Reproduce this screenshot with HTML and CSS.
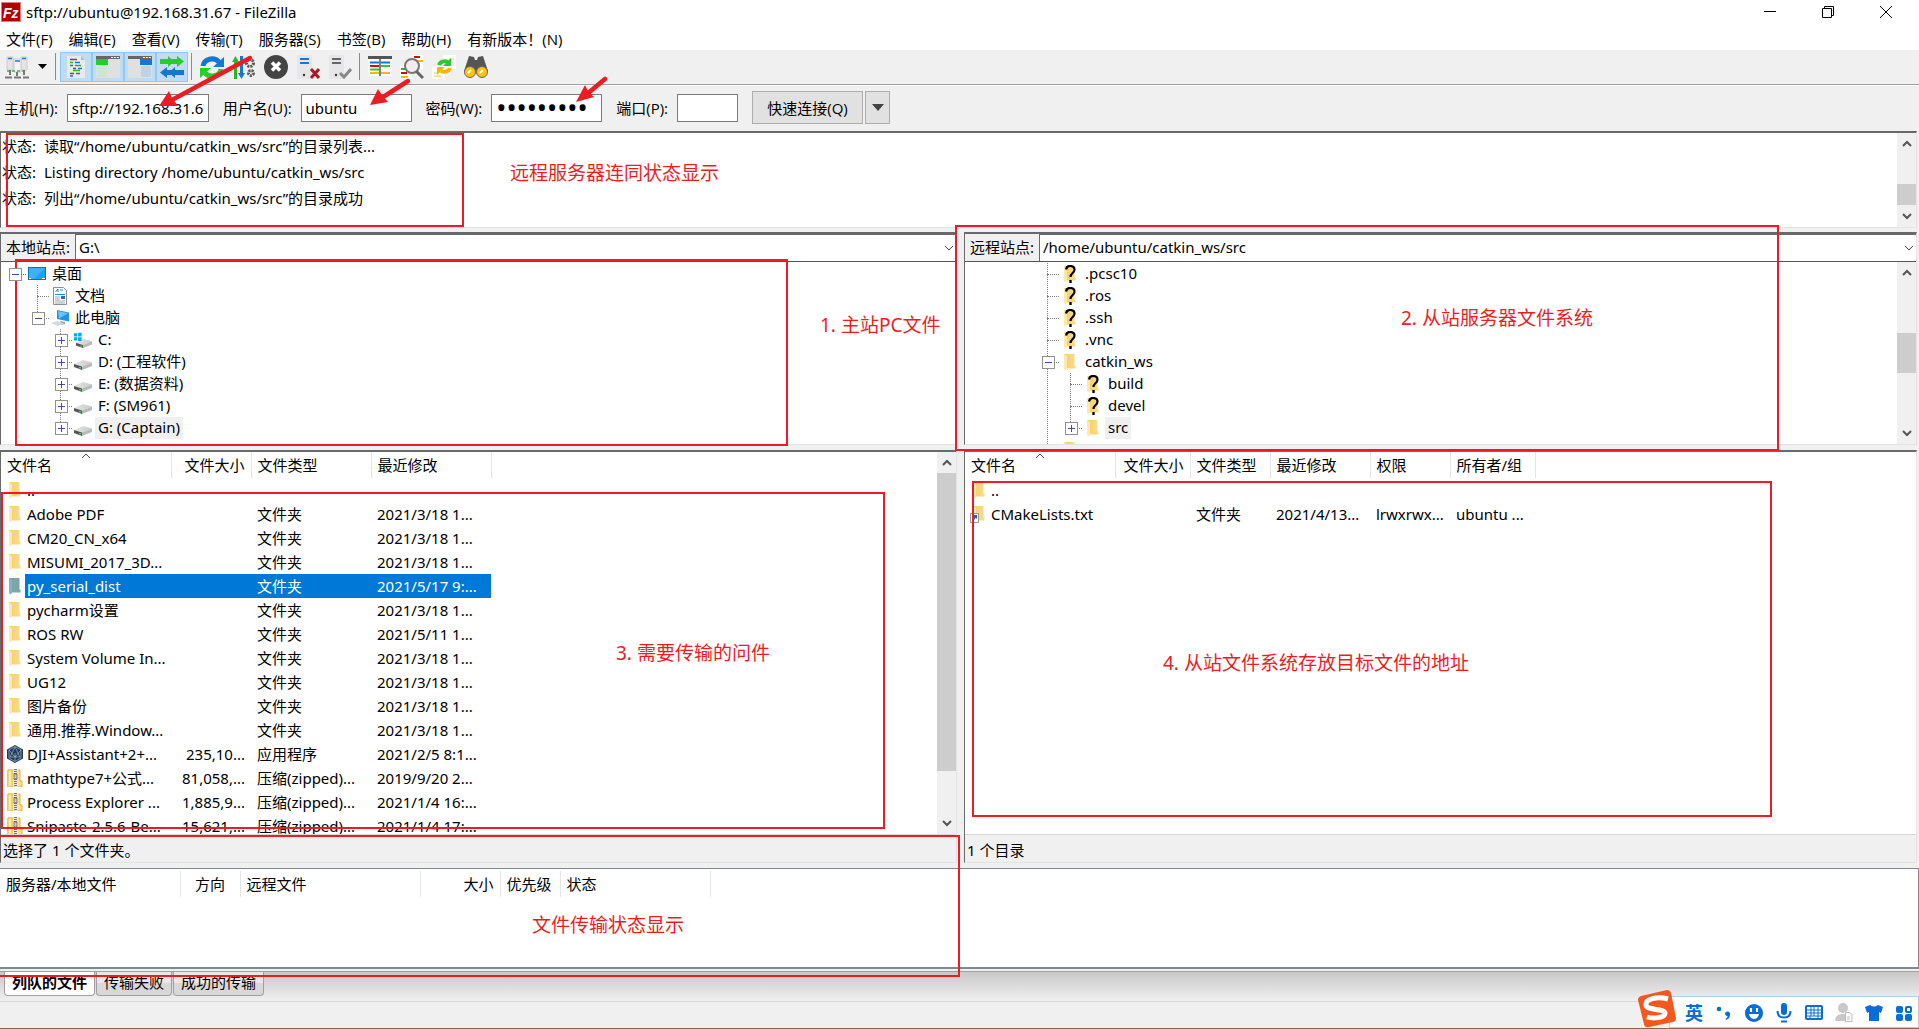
FILE: index.html
```html
<!DOCTYPE html>
<html lang="zh-CN">
<head>
<meta charset="utf-8">
<title>sftp://ubuntu@192.168.31.67 - FileZilla</title>
<link rel="stylesheet" href="styles.css">
</head>
<body>
<svg class="defs" aria-hidden="true">
  <defs>
    <linearGradient id="gold" x1="0" x2="1" y1="0" y2="0"><stop offset="0" stop-color="#f3ce6a"/><stop offset="1" stop-color="#f9dd8a"/></linearGradient>
    <linearGradient id="metal" x1="0" x2="1" y1="0" y2="0"><stop offset="0" stop-color="#e6e6e8"/><stop offset="1" stop-color="#c8c9cc"/></linearGradient>
    <symbol id="folder" viewBox="0 0 18 18"><path d="M3 1h10.500v11.500h1v3H3z" fill="url(#gold)"/><path d="M3 1l3 2v13l-1.500 1.500L3 16z" fill="#ffe9a6"/></symbol>
    <symbol id="folder-sel" viewBox="0 0 18 18"><path d="M3 1h10.500v11.500h1v3H3z" fill="#7ba6a6"/><path d="M3 1l3 2v13l-1.500 1.500L3 16z" fill="#7fb0cf"/></symbol>
    <symbol id="folder-q" viewBox="0 0 18 18"><use href="#folder"/><path d="M5 4.500C5.500 1.500 7 1 9 1c3 0 4.500 1.500 4.500 3.700C13.500 8 9.500 8 9.500 12" fill="none" stroke="#000" stroke-width="2.200"/><rect x="8.300" y="15" width="2.400" height="3"/></symbol>
    <symbol id="link" viewBox="0 0 18 18"><use href="#folder"/><rect x=".5" y="8.500" width="8" height="9" fill="#fff" stroke="#999"/><path d="M3 10h4v4L5.700 12.700 3.500 16 2 14.500l2.300-3z" fill="#2b5ba8"/></symbol>
    <symbol id="zip" viewBox="0 0 18 18"><path d="M2 1h12v11h2v6H2z" fill="#ffdf7f" stroke="#d9b23c"/><path d="M2 1h4v17H2z" fill="#ffeaa0" stroke="#e0bd50"/><path d="M9.500 0v18" stroke="#e8e8e8" stroke-width="5"/><path d="M9.500 0v18" stroke="#777" stroke-width="3" stroke-dasharray="1 1"/><rect x="8" y="5" width="3" height="5" fill="#ccc" stroke="#555" stroke-width=".7"/></symbol>
    <symbol id="dji" viewBox="0 0 18 18"><path d="M9 0l8 4.500v9L9 18l-8-4.500v-9z" fill="#203a55"/><path d="M9 1.500L3 5v8l6 3.500 6-3.500V5zM9 2l-5 10h10zM3 5l6 7 6-7M9 8v8" fill="none" stroke="#9dbad2" stroke-width=".7"/></symbol>
    <symbol id="desktop" viewBox="0 0 18 18"><rect x=".5" y="2.500" width="17" height="12" fill="#1ba1f5" stroke="#0873b8"/><path d="M17 3L6 14H1V3z" fill="#3cb0fa"/><path d="M1 13.500h2m11 0h3" stroke="#fff"/></symbol>
    <symbol id="doc" viewBox="0 0 18 18"><path d="M2.500.5h10l3 3v14h-13z" fill="#fff" stroke="#8a8f94"/><path d="M4.500 5L7 2v3M9 3h3M4 7.500h10" stroke="#2a84c8" fill="none"/><path d="M4 10h5m-5 2h5m-5 2h10M4 16h10" stroke="#9aa"/><rect x="10" y="9" width="4" height="3" fill="#2a6f9e"/></symbol>
    <symbol id="pc" viewBox="0 0 18 18"><path d="M6 1l12 2.500v9L6 10z" fill="#2196e0"/><path d="M7 2l10 2.200L8 9.500z" fill="#6cc3f5"/><path d="M9 12l5 1v2l-4 1z" fill="#98a5b0"/><path d="M0 14l6-2 7 2.500-6 2.500z" fill="#d5dade"/></symbol>
    <symbol id="drive" viewBox="0 0 18 18"><path d="M0 11l9-4 9 2.500L8 13.500z" fill="url(#metal)"/><path d="M0 11l8 2.500V17l-8-3z" fill="#555"/><path d="M8 13.500l10-4v3.500L8 17z" fill="#b8b9bb"/><rect x="5" y="14" width="2" height="1.500" fill="#39d353"/></symbol>
    <symbol id="drive-c" viewBox="-2 0 20 18"><use href="#drive" y="1" width="18" height="18"/><path d="M-2 1.500h3.500V5H-2zM2.500 1h4v4h-4zM-2 6h3.500v3.500H-2zM2.500 6h4v4h-4z" fill="#00adef"/></symbol>
    <symbol id="up" viewBox="0 0 10 8"><path d="M1 6l4-4 4 4" fill="none" stroke="#555" stroke-width="2"/></symbol>
    <symbol id="down" viewBox="0 0 10 8"><path d="M1 2l4 4 4-4" fill="none" stroke="#555" stroke-width="2"/></symbol>
    <symbol id="thin" viewBox="0 0 10 8"><path d="M1 2l4 4 4-4" fill="none" stroke="#444"/></symbol>
  </defs>
</svg>

<header class="titlebar">
  <svg class="app-icon" viewBox="0 0 20 20"><rect width="20" height="20" fill="#b30000"/><rect x=".5" y=".5" width="19" height="19" fill="none" stroke="#fff" stroke-dasharray="1 1"/><text x="2" y="16" class="logo-text">Fz</text></svg>
  <h1>sftp://ubuntu@192.168.31.67 - FileZilla</h1>
  <div class="win-buttons">
    <button aria-label="最小化"><svg viewBox="0 0 12 12"><path d="M0 5.500h12" stroke="#000"/></svg></button>
    <button aria-label="还原"><svg viewBox="0 0 12 12"><path d="M.5 2.500h9v9h-9zM2.500 2.500v-2h9v9h-2" fill="none" stroke="#000"/></svg></button>
    <button aria-label="关闭"><svg viewBox="0 0 12 12"><path d="M0 0l12 12M12 0L0 12" stroke="#000"/></svg></button>
  </div>
</header>
<nav class="menubar">
  <a href="#">文件(F)</a><a href="#">编辑(E)</a><a href="#">查看(V)</a><a href="#">传输(T)</a><a href="#">服务器(S)</a><a href="#">书签(B)</a><a href="#">帮助(H)</a><a href="#">有新版本！(N)</a>
</nav>

<div class="toolbar">
  <button class="tool" aria-label="站点管理器"><svg viewBox="0 0 24 24"><path d="M2 2h6v13H2zM16 2h6v13h-6z" fill="#e4e4e4" stroke="#ccc"/><path d="M9 4h7v13H9z" fill="#f4f4f4" stroke="#ccc"/><path d="M3 3.500h4m10 0h4M10 6h5" stroke="#1c7bd8" stroke-width="1.500"/><path d="M2 16h20" stroke="#39b54a" stroke-width="1.500" stroke-dasharray="3 2"/><path d="M5 15v5m7-3v4m7-6v5M0 22.500h7m2 0h7m2 0h6" stroke="#777" stroke-width="2"/></svg></button>
  <button class="tool-drop" aria-label="站点列表"><svg viewBox="0 0 10 6"><path d="M0 0h9L4.500 5z"/></svg></button>
  <span class="sep"></span>
  <button class="tool on" aria-label="消息日志"><svg viewBox="0 0 24 24"><path d="M3 1h14l4 4v18H3z" fill="#e9eaec"/><path d="M17 1v4h4z" fill="#bbb"/><path d="M6 4.500h7M9 13.500h3M6 18.500h4" stroke="#555" stroke-width="1.500"/><path d="M6 7.500h3m2 3h6m-8 5h7" stroke="#29b52d" stroke-width="1.500"/><path d="M11 7.500h5M6 10.500h3m5 3h4m-6 5h4M6 21h3" stroke="#1677d2" stroke-width="1.500"/></svg></button>
  <button class="tool on" aria-label="本地目录树"><svg viewBox="0 0 24 24"><rect y="1" width="24" height="22" rx="1" fill="#dfe0e2"/><path d="M0 1h24v3H0z" fill="#666"/><path d="M15 2.500h8" stroke="#fff" stroke-dasharray="2 1"/><path d="M0 4h12v6H0z" fill="#29cc2d"/><path d="M1 11h10v11H1z" fill="#cfe5cf"/></svg></button>
  <button class="tool on" aria-label="远程目录树"><svg viewBox="0 0 24 24"><rect y="1" width="24" height="22" rx="1" fill="#dfe0e2"/><path d="M0 1h24v3H0z" fill="#666"/><path d="M15 2.500h8" stroke="#fff" stroke-dasharray="2 1"/><path d="M12 4h12v6H12z" fill="#1677d2"/><path d="M13 11h10v11H13z" fill="#bdd3e6"/></svg></button>
  <button class="tool on" aria-label="传输队列"><svg viewBox="0 0 24 24"><path d="M0 4h8V1l6 5.500L8 12V9H0z" fill="#29cc2d"/><path d="M8 4h9V1l7 5.500L17 12V9H8z" fill="#29cc2d"/><path d="M24 15h-9v-3l-6 5.500 6 5.500v-3h9z" fill="#1677d2"/><path d="M15 15H7v-3l-7 5.500L7 23v-3h8z" fill="#1677d2"/></svg></button>
  <span class="sep"></span>
  <button class="tool" aria-label="刷新"><svg viewBox="0 0 24 24"><path d="M3 11a9 8 0 0 1 16-4" fill="none" stroke="#1677d2" stroke-width="5"/><path d="M24 2v10H13z" fill="#1677d2"/><path d="M21 14a9 8 0 0 1-16 4" fill="none" stroke="#29cc2d" stroke-width="5"/><path d="M0 23V13h11z" fill="#29cc2d"/></svg></button>
  <button class="tool" aria-label="处理队列"><svg viewBox="0 0 24 24"><path d="M3.500 24V5" stroke="#29b52d" stroke-width="3"/><path d="M0 7l3.500-6L7 7z" fill="#29b52d"/><path d="M9.500 1v18" stroke="#1677d2" stroke-width="3"/><path d="M6 18l3.500 6 3.500-6z" fill="#1677d2"/><circle cx="18" cy="8" r="3.500" fill="none" stroke="#555" stroke-width="3" stroke-dasharray="2 1"/><circle cx="19" cy="18" r="2.500" fill="none" stroke="#555" stroke-width="3" stroke-dasharray="2 1"/></svg></button>
  <button class="tool" aria-label="取消"><svg viewBox="0 0 24 24"><circle cx="12" cy="12" r="12" fill="#444"/><path d="M8 7.500l8 8m0-8l-8 8" stroke="#fff" stroke-width="3.500"/></svg></button>
  <button class="tool" aria-label="断开连接"><svg viewBox="0 0 24 24"><path d="M1 0h15v24H1z" fill="#e6e6e8"/><path d="M4 4h9M4 8h9" stroke="#1677d2" stroke-width="2"/><circle cx="8" cy="20" r="1.200" fill="#333"/><path d="M15 14l8 9m0-9l-8 9" stroke="#b01722" stroke-width="3"/></svg></button>
  <button class="tool" aria-label="重新连接"><svg viewBox="0 0 24 24"><path d="M1 0h15v24H1z" fill="#e6e6e8"/><path d="M4 4h9M4 8h9" stroke="#666" stroke-width="2"/><circle cx="8" cy="20" r="1.200" fill="#333"/><path d="M12 18l4 4 7-8" fill="none" stroke="#888" stroke-width="3"/></svg></button>
  <span class="sep"></span>
  <button class="tool" aria-label="目录列表过滤器"><svg viewBox="0 0 24 24"><path d="M0 2h24v19H0z" fill="#fafafa"/><path d="M0 1h24v3H0z" fill="#555"/><path d="M2 7.500h9m2 0h9" stroke="#1677d2" stroke-width="2"/><path d="M2 11h9" stroke="#c4121a" stroke-width="2"/><path d="M13 11h9M2 14.500h9" stroke="#29cc2d" stroke-width="2"/><path d="M2 18h9m2 0h9" stroke="#f0bd00" stroke-width="2"/><path d="M12 4v17" stroke="#555" stroke-width="1.500"/></svg></button>
  <button class="tool" aria-label="目录比较"><svg viewBox="0 0 24 24"><path d="M12 0h11v14H12zM0 10h12v14H0z" fill="#fff"/><path d="M14 2h6M1 18h6" stroke="#c4121a" stroke-width="2"/><path d="M17 6h6" stroke="#f0bd00" stroke-width="2"/><path d="M1 14h5" stroke="#29b52d" stroke-width="2"/><path d="M1 22h7" stroke="#f0bd00" stroke-width="2"/><circle cx="12" cy="11" r="7" fill="#eee" stroke="#777" stroke-width="2"/><path d="M16 16l7 7" stroke="#666" stroke-width="3"/></svg></button>
  <button class="tool" aria-label="同步浏览"><svg viewBox="0 0 24 24"><path d="M11 0h13v14H11zM0 11h13v13H0z" fill="#fff"/><path d="M2 18h5m-5 3h7m8-17h5" stroke="#ffd978" stroke-width="1.500"/><path d="M7 10a6 5 0 0 1 9-3" fill="none" stroke="#29cc2d" stroke-width="4"/><path d="M19 3v8h-8z" fill="#29cc2d"/><path d="M18 13a6 5 0 0 1-9 3" fill="none" stroke="#f5b800" stroke-width="4"/><path d="M5 20v-8h8z" fill="#f5b800"/></svg></button>
  <button class="tool" aria-label="查找文件"><svg viewBox="0 0 24 24"><path d="M5 1l5 1 1 3h2l1-3 5-1 5 15-9 3-3-4-3 4-9-3z" fill="#555"/><circle cx="6" cy="17" r="5.500" fill="#ffc20e" stroke="#666"/><circle cx="18" cy="17" r="5.500" fill="#ffc20e" stroke="#666"/><path d="M4 18l3-3m9 3l3-3" stroke="#fff" stroke-width="2"/></svg></button>
</div>

<form class="quick">
  <label for="host">主机(H):</label><input id="host" class="w-host" value="sftp://192.168.31.67">
  <label for="user">用户名(U):</label><input id="user" class="w-user" value="ubuntu">
  <label for="pass">密码(W):</label><input id="pass" class="w-user" type="password" value="123456789">
  <label for="port">端口(P):</label><input id="port" class="w-port">
  <div class="quick-go"><button type="button" class="go">快速连接(Q)</button><button type="button" class="go-drop" aria-label="历史记录"><svg viewBox="0 0 12 7"><path d="M0 0h12L6 7z" fill="#444"/></svg></button></div>
</form>

<section class="log">
  <div class="log-lines">
    <p><b>状态:</b><span>读取“/home/ubuntu/catkin_ws/src”的目录列表...</span></p>
    <p><b>状态:</b><span>Listing directory /home/ubuntu/catkin_ws/src</span></p>
    <p><b>状态:</b><span>列出“/home/ubuntu/catkin_ws/src”的目录成功</span></p>
  </div>
  <div class="scroll log-scroll"><svg><use href="#up"/></svg><i></i><svg><use href="#down"/></svg></div>
</section>

<main class="sites">
  <section class="site">
    <div class="tree-pane">
      <div class="path"><label for="local">本地站点:</label><div class="combo"><select id="local"><option>G:\</option></select><svg><use href="#thin"/></svg></div></div>
      <div class="tree-body">
        <div class="tree">
          <div class="node"><i class="j box"></i><svg><use href="#desktop"/></svg><span>桌面</span></div>
          <div class="node"><i class="g"></i><i class="j mid"></i><svg><use href="#doc"/></svg><span>文档</span></div>
          <div class="node"><i class="g"></i><i class="j last box"></i><svg><use href="#pc"/></svg><span>此电脑</span></div>
          <div class="node"><i class="g"></i><i class="g"></i><i class="j mid box plus"></i><svg><use href="#drive-c"/></svg><span>C:</span></div>
          <div class="node"><i class="g"></i><i class="g"></i><i class="j mid box plus"></i><svg><use href="#drive"/></svg><span>D: (工程软件)</span></div>
          <div class="node"><i class="g"></i><i class="g"></i><i class="j mid box plus"></i><svg><use href="#drive"/></svg><span>E: (数据资料)</span></div>
          <div class="node"><i class="g"></i><i class="g"></i><i class="j mid box plus"></i><svg><use href="#drive"/></svg><span>F: (SM961)</span></div>
          <div class="node"><i class="g"></i><i class="g"></i><i class="j last box plus"></i><svg><use href="#drive"/></svg><span class="cur">G: (Captain)</span></div>
        </div>
      </div>
    </div>
    <div class="list-pane">
      <div class="list-body">
        <div class="list">
          <table class="local-table">
            <colgroup><col class="c170"><col class="c80"><col class="c120"><col class="c120"></colgroup>
            <thead><tr><th class="sorted">文件名<svg><use href="#thin"/></svg></th><th class="num">文件大小</th><th>文件类型</th><th>最近修改</th></tr></thead>
            <tbody>
              <tr><td><svg><use href="#folder"/></svg><span>..</span></td><td></td><td></td><td></td></tr>
              <tr><td><svg><use href="#folder"/></svg><span>Adobe PDF</span></td><td></td><td>文件夹</td><td>2021/3/18 1...</td></tr>
              <tr><td><svg><use href="#folder"/></svg><span>CM20_CN_x64</span></td><td></td><td>文件夹</td><td>2021/3/18 1...</td></tr>
              <tr><td><svg><use href="#folder"/></svg><span>MISUMI_2017_3D...</span></td><td></td><td>文件夹</td><td>2021/3/18 1...</td></tr>
              <tr class="selected"><td><svg><use href="#folder-sel"/></svg><span>py_serial_dist</span></td><td></td><td>文件夹</td><td>2021/5/17 9:...</td></tr>
              <tr><td><svg><use href="#folder"/></svg><span>pycharm设置</span></td><td></td><td>文件夹</td><td>2021/3/18 1...</td></tr>
              <tr><td><svg><use href="#folder"/></svg><span>ROS RW</span></td><td></td><td>文件夹</td><td>2021/5/11 1...</td></tr>
              <tr><td><svg><use href="#folder"/></svg><span>System Volume In...</span></td><td></td><td>文件夹</td><td>2021/3/18 1...</td></tr>
              <tr><td><svg><use href="#folder"/></svg><span>UG12</span></td><td></td><td>文件夹</td><td>2021/3/18 1...</td></tr>
              <tr><td><svg><use href="#folder"/></svg><span>图片备份</span></td><td></td><td>文件夹</td><td>2021/3/18 1...</td></tr>
              <tr><td><svg><use href="#folder"/></svg><span>通用.推荐.Window...</span></td><td></td><td>文件夹</td><td>2021/3/18 1...</td></tr>
              <tr><td><svg><use href="#dji"/></svg><span>DJI+Assistant+2+...</span></td><td class="num">235,10...</td><td>应用程序</td><td>2021/2/5 8:1...</td></tr>
              <tr><td><svg><use href="#zip"/></svg><span>mathtype7+公式...</span></td><td class="num">81,058,...</td><td>压缩(zipped)...</td><td>2019/9/20 2...</td></tr>
              <tr><td><svg><use href="#zip"/></svg><span>Process Explorer ...</span></td><td class="num">1,885,9...</td><td>压缩(zipped)...</td><td>2021/1/4 16:...</td></tr>
              <tr><td><svg><use href="#zip"/></svg><span>Snipaste-2.5.6-Be...</span></td><td class="num">15,621,...</td><td>压缩(zipped)...</td><td>2021/1/4 17:...</td></tr>
            </tbody>
          </table>
        </div>
        <div class="scroll list-scroll"><svg><use href="#up"/></svg><i></i><svg><use href="#down"/></svg></div>
      </div>
      <p class="summary">选择了 1 个文件夹。</p>
    </div>
  </section>

  <section class="site">
    <div class="tree-pane">
      <div class="path"><label for="remote">远程站点:</label><div class="combo"><select id="remote"><option>/home/ubuntu/catkin_ws/src</option></select><svg><use href="#thin"/></svg></div></div>
      <div class="tree-body">
        <div class="tree">
          <div class="node"><i class="g"></i><i class="g"></i><i class="g"></i><i class="j mid"></i><svg><use href="#folder-q"/></svg><span>.pcsc10</span></div>
          <div class="node"><i class="g"></i><i class="g"></i><i class="g"></i><i class="j mid"></i><svg><use href="#folder-q"/></svg><span>.ros</span></div>
          <div class="node"><i class="g"></i><i class="g"></i><i class="g"></i><i class="j mid"></i><svg><use href="#folder-q"/></svg><span>.ssh</span></div>
          <div class="node"><i class="g"></i><i class="g"></i><i class="g"></i><i class="j mid"></i><svg><use href="#folder-q"/></svg><span>.vnc</span></div>
          <div class="node"><i class="g"></i><i class="g"></i><i class="g"></i><i class="j mid box"></i><svg><use href="#folder"/></svg><span>catkin_ws</span></div>
          <div class="node"><i class="g"></i><i class="g"></i><i class="g"></i><i class="g line"></i><i class="j mid"></i><svg><use href="#folder-q"/></svg><span>build</span></div>
          <div class="node"><i class="g"></i><i class="g"></i><i class="g"></i><i class="g line"></i><i class="j mid"></i><svg><use href="#folder-q"/></svg><span>devel</span></div>
          <div class="node"><i class="g"></i><i class="g"></i><i class="g"></i><i class="g line"></i><i class="j last box plus"></i><svg><use href="#folder"/></svg><span class="cur">src</span></div>
          <div class="node"><i class="g"></i><i class="g"></i><i class="g"></i><i class="j mid"></i><svg><use href="#folder"/></svg><span>snapd</span></div>
        </div>
        <div class="scroll tree-scroll"><svg><use href="#up"/></svg><i></i><svg><use href="#down"/></svg></div>
      </div>
    </div>
    <div class="list-pane">
      <div class="list-body">
        <div class="list">
          <table class="remote-table">
            <colgroup><col class="c150"><col class="c75"><col class="c80"><col class="c100"><col class="c80"><col class="c85"></colgroup>
            <thead><tr><th class="sorted">文件名<svg><use href="#thin"/></svg></th><th class="num">文件大小</th><th>文件类型</th><th>最近修改</th><th>权限</th><th>所有者/组</th></tr></thead>
            <tbody>
              <tr><td><svg><use href="#folder"/></svg><span>..</span></td><td></td><td></td><td></td><td></td><td></td></tr>
              <tr><td><svg><use href="#link"/></svg><span>CMakeLists.txt</span></td><td></td><td>文件夹</td><td>2021/4/13...</td><td>lrwxrwx...</td><td>ubuntu ...</td></tr>
            </tbody>
          </table>
        </div>
      </div>
      <p class="summary">1 个目录</p>
    </div>
  </section>
</main>

<section class="queue">
  <table class="queue-table">
    <colgroup><col class="c180"><col class="c60"><col class="c180"><col class="c80"><col class="c60"><col class="c150"></colgroup>
    <thead><tr><th>服务器/本地文件</th><th class="center">方向</th><th>远程文件</th><th class="num">大小</th><th>优先级</th><th>状态</th></tr></thead>
  </table>
</section>
<div class="tabs"><button class="active">列队的文件</button><button>传输失败</button><button>成功的传输</button></div>
<footer class="statusbar"></footer>

<div class="ime">
  <svg class="sogou" viewBox="0 0 40 38"><path d="M4 6L30 0q3 0 4 3l5 25q0 3-3 4L12 37q-4 1-5-3L1 10q0-3 3-4z" fill="#f4581f"/><path d="M31 9C20 6 8 9 9 15c1 6 18 3 19 8 0 5-12 6-18 4" fill="none" stroke="#fff" stroke-width="5"/></svg>
  <div class="ime-bar">
    <span>英</span>
    <svg viewBox="0 0 18 18"><circle cx="4" cy="5" r="2.300"/><path d="M10 10a2.500 2.500 0 1 1 5 0c0 3-1 5-4 6l-.5-1c1.500-1 2-1.500 2-3a2.500 2.500 0 0 1-2.500-2z"/></svg>
    <svg viewBox="0 0 18 18"><circle cx="9" cy="9" r="9"/><path d="M6 4v4m6-4v4" stroke="#fff" stroke-width="2.200"/><path d="M4 10h10q-1 5-5 5t-5-5z" fill="#fff"/></svg>
    <svg viewBox="0 0 18 18"><rect x="6" y="-1" width="6" height="12" rx="3"/><path d="M2.500 7q0 6.500 6.500 6.500T15.500 7" fill="none" stroke="#0a6cd6" stroke-width="2"/><path d="M6 17.500h6" stroke="#0a6cd6" stroke-width="2"/></svg>
    <svg viewBox="0 0 18 18"><rect x="1" y="2" width="16" height="13" rx="1" fill="none" stroke="#0a6cd6" stroke-width="2"/><path d="M2 6h14M2 9h14M2 12h14M6 3v9m3-9v9m4-9v9M5 12v3m8-3v3" stroke="#0a6cd6"/></svg>
    <svg viewBox="0 0 18 18" class="muted"><circle cx="8" cy="4" r="5"/><path d="M0 17q0-7 8-7t8 7z"/><path d="M10.500 8.500h4l2.500 2v7h-6.500zM12 13h3m-3 2h3" fill="#fff" stroke="#bbb"/></svg>
    <svg viewBox="0 0 18 18"><path d="M5 1q4 3 8 0l5 2-2 6-2-1v9H4V8L2 9 0 3z"/></svg>
    <svg viewBox="0 0 18 18"><rect x="1" y="2" width="7" height="7" rx="2"/><rect x="11" y="3" width="5" height="5" rx="1" fill="none" stroke="#0a6cd6" stroke-width="2"/><rect x="1" y="10" width="7" height="7" rx="2"/><rect x="10" y="10" width="7" height="7" rx="2"/></svg>
  </div>
</div>

<div class="notes">
  <div class="frame f-log"></div><div class="frame f-ltree"></div><div class="frame f-rtree"></div><div class="frame f-llist"></div><div class="frame f-rlist"></div><div class="frame f-queue"></div>
  <p class="n-log">远程服务器连同状态显示</p>
  <p class="n-ltree">1. 主站PC文件</p>
  <p class="n-rtree">2. 从站服务器文件系统</p>
  <p class="n-llist">3. 需要传输的问件</p>
  <p class="n-rlist">4. 从站文件系统存放目标文件的地址</p>
  <p class="n-queue">文件传输状态显示</p>
  <svg class="arrows" viewBox="0 0 640 120"><g stroke="#ed1c24" stroke-width="4.500" stroke-linecap="round"><path d="M250 58L170 101"/><path d="M408 81L380 99"/><path d="M605 79L587 94"/></g><g fill="#ed1c24"><path d="M159 106l10-15 3 7 6 8z"/><path d="M370 105l8-16 4 6 6 7z"/><path d="M576 102l9-17 3 6 6 6z"/></g></svg>
</div>
</body>
</html>
```
FILE: styles.css
```css
* { box-sizing: border-box; }

body {
  margin: 0;
  height: 100vh;
  display: flex;
  flex-direction: column;
  overflow: hidden;
  position: relative;
  background: #f0f0f0;
  color: #000;
  font: 15px/20px "Noto Sans", "Noto Sans CJK SC", sans-serif;
}

h1, p { margin: 0; font-size: inherit; font-weight: normal; }
button, input, select { font: inherit; color: inherit; margin: 0; padding: 0; border: 0; border-radius: 0; background: none; }
svg { display: block; flex: none; }
.defs { position: absolute; width: 0; height: 0; }

.titlebar { display: flex; align-items: center; height: 25px; padding: 0 0 2px 1px; background: #fff; }
.titlebar h1 { flex: 1; margin-left: 5px; }
.app-icon { width: 20px; height: 20px; }
.logo-text { font: italic bold 14px "Liberation Sans", sans-serif; fill: #fff; }
.win-buttons { display: flex; padding-right: 4px; }
.win-buttons button { width: 58px; height: 22px; display: flex; align-items: center; justify-content: center; }
.win-buttons svg { width: 12px; height: 12px; }

.menubar { display: flex; gap: 16px; height: 25px; padding: 4px 6px 0; background: #fff; font-family: "Open Sans", "Noto Sans CJK SC", sans-serif; }
.menubar a { color: #000; text-decoration: none; white-space: nowrap; }

.toolbar { display: flex; align-items: center; height: 36px; padding: 0 1px 2px; border-bottom: 1px solid #fff; box-shadow: inset 0 -1px #a0a0a0; }
.tool { width: 32px; height: 30px; display: flex; align-items: center; justify-content: center; }
.tool svg { width: 24px; height: 24px; }
.tool.on { background: #c0dcf3; border: 1px solid #90c8f6; }
.tool-drop { width: 19px; padding-left: 5px; }
.tool-drop svg { width: 10px; height: 6px; }
.sep { width: 1px; height: 27px; margin: 0 4px 0 3px; background: #8c8c8c; }

.quick { display: flex; align-items: center; height: 45px; padding: 0 4px 2px; font-family: "Open Sans", "Noto Sans CJK SC", sans-serif; }
.quick label { margin-right: 9px; white-space: nowrap; }
.quick input { height: 28px; margin-right: 14px; padding: 0 4px; border: 1px solid #7a7a7a; background: #fff; font-family: "Noto Sans", sans-serif; }
.quick input[type="password"] { font-size: 27px; }
.w-host { width: 142px; }
.w-user { width: 111px; }
.w-port { width: 61px; }
.quick-go { display: flex; gap: 2px; }
.go, .go-drop { height: 33px; border: 1px solid #adadad; background: #e1e1e1; }
.go { width: 111px; }
.go-drop { width: 25px; display: flex; align-items: center; justify-content: center; }
.go-drop svg { width: 12px; height: 7px; }

.log { display: flex; height: 97px; margin-right: 2px; border: solid; border-width: 2px 1px 1px; border-color: #696969 #e3e3e3 #e3e3e3 #696969; background: #fff; }
.log-lines { flex: 1; overflow: hidden; }
.log p { display: flex; height: 26px; align-items: center; padding-left: 1px; }
.log b { width: 42px; font-weight: normal; }

.scroll { display: flex; flex-direction: column; align-items: center; width: 19px; padding: 7px 0; background: #f0f0f0; }
.scroll svg { width: 10px; height: 8px; }
.scroll i { width: 19px; background: #cdcdcd; }
.scroll svg:last-child { margin-top: auto; }
.log-scroll i { margin-top: 36px; height: 21px; }
.tree-scroll i { margin-top: 56px; height: 40px; }
.list-scroll i { margin-top: 6px; height: 298px; }

.sites { flex: 1; display: grid; grid-template-columns: 957fr 953fr; gap: 7px; min-height: 0; padding: 4px 2px 0 0; }
.site { display: flex; flex-direction: column; gap: 5px; min-width: 0; min-height: 0; }
.tree-pane, .list-pane { display: flex; flex-direction: column; border: solid; border-width: 2px 1px 1px; border-color: #696969 #e3e3e3 #e3e3e3 #696969; background: #fff; overflow: hidden; }
.tree-pane { height: 213px; flex: none; }
.list-pane { flex: 1; min-height: 0; }
.path { display: flex; height: 28px; flex: none; border-bottom: 1px solid #555; }
.path label { width: 75px; padding: 3px 0 0 5px; border-right: 1px solid #696969; background: #f0f0f0; white-space: nowrap; }
.combo { flex: 1; display: grid; align-items: center; border-top: 1px solid #696969; }
.combo select, .combo svg { grid-area: 1 / 1; }
.combo select { appearance: none; width: 100%; height: 26px; padding: 0 0 2px 3px; background: #fff; }
.combo svg { justify-self: end; width: 10px; height: 8px; margin-right: 2px; pointer-events: none; }

.tree-body { display: flex; flex: 1; min-height: 0; }
.tree { flex: 1; overflow: hidden; padding: 1px 0 0 2px; }
.node { display: flex; align-items: center; height: 22px; }
.node svg { width: 18px; height: 18px; margin: 0 3px 0 2px; overflow: visible; }
.node span { padding: 0 3px; height: 22px; white-space: nowrap; }
.node .cur { background: #f0f0f0; }
.g, .j { flex: none; width: 23px; height: 22px; }
.j { display: grid; grid-template-columns: 11px 12px; align-items: center; background: repeating-linear-gradient(#808080 0 1px, transparent 1px 2px) 11px 0 / 1px 11px no-repeat; }
.g.line, .j.mid { background: repeating-linear-gradient(#808080 0 1px, transparent 1px 2px) 11px 0 / 1px 100% no-repeat; }
.node:first-child > .j:first-child { background: none; }
.j::after { content: ""; grid-area: 1 / 2; border-top: 1px dotted #808080; }
.j.box::before { content: ""; grid-area: 1 / 1 / 2 / 3; z-index: 1; width: 11px; height: 11px; margin-left: 6px; border: 1px solid #919191; background: linear-gradient(#3c50a0, #3c50a0) center / 7px 1px no-repeat, #fff; }
.j.plus::before { background: linear-gradient(#3c50a0, #3c50a0) center / 7px 1px no-repeat, linear-gradient(#3c50a0, #3c50a0) center / 1px 7px no-repeat, #fff; }

.list-body { display: flex; flex: 1; min-height: 0; }
.list { flex: 1; overflow: hidden; }
table { table-layout: fixed; border-collapse: collapse; }
.local-table { width: 490px; }
.remote-table { width: 570px; }
.queue-table { width: 710px; margin-top: 2px; }
.c60 { width: 60px; } .c75 { width: 75px; } .c80 { width: 80px; } .c85 { width: 85px; } .c100 { width: 100px; }
.c120 { width: 120px; } .c150 { width: 150px; } .c170 { width: 170px; } .c180 { width: 180px; }
th, td { padding: 0 6px; text-align: left; font-weight: normal; white-space: nowrap; overflow: hidden; }
th { height: 26px; border-right: 1px solid #e5e5e5; }
td { height: 24px; }
.num { text-align: right; }
.center { text-align: center; }
.sorted { position: relative; }
.sorted svg { position: absolute; top: 0; left: 50%; width: 10px; height: 8px; margin-left: -5px; transform: rotate(180deg); }
td:first-child { display: flex; align-items: center; padding: 0; }
td svg { width: 18px; height: 18px; margin: 0 1px 0 5px; }
td span { flex: 1; height: 24px; padding: 2px; }
.selected td { color: #fff; background: #0078d7; }
.selected td:first-child { background: #fff; }
.selected span { background: #0078d7; }
.summary { height: 28px; padding: 5px 2px 0; background: #f0f0f0; border-top: 1px solid #d9d9d9; }

.queue { height: 101px; margin-top: 5px; border: solid #828790; border-width: 1px 1px 2px 0; background: #fff; }
.tabs { display: flex; align-items: flex-start; gap: 1px; height: 31px; margin-top: 2px; padding-left: 4px; border-top: 1px solid #a0a0a0; border-bottom: 1px solid #d9d9d9; background: linear-gradient(#c8c8c8, #f0f0f0); }
.tabs button { height: 24px; padding: 0 7px 3px; border: 1px solid #a0a0a0; border-top: 0; border-radius: 0 0 4px 4px; background: linear-gradient(#e8e8e8 50%, #d8d8d8 50%); }
.tabs .active { background: #fff; font-weight: bold; }
.statusbar { height: 27px; border-bottom: 1px solid #7d6b45; }

.ime { position: absolute; right: 0; bottom: 1px; display: flex; align-items: flex-end; }
.sogou { width: 40px; height: 38px; margin-right: -8px; z-index: 1; }
.ime-bar { display: flex; align-items: center; gap: 12px; height: 32px; padding: 2px 5px 0 15px; border: 1px solid #b5cde8; background: #fff; color: #0a6cd6; fill: #0a6cd6; }
.ime-bar span { width: 18px; font-size: 18px; font-weight: bold; }
.ime-bar svg { width: 18px; height: 18px; overflow: visible; }
.ime-bar .muted { fill: #c8c8c8; }

.notes { position: absolute; inset: 0; pointer-events: none; color: #ed1c24; font-size: 19px; line-height: 26px; }
.notes p, .frame, .arrows { position: absolute; white-space: nowrap; }
.frame { border: 2px solid #ed1c24; }
.f-log { left: 6px; top: 133px; width: 458px; height: 94px; }
.f-ltree { left: 15px; top: 259px; width: 773px; height: 187px; }
.f-rtree { left: 955px; top: 225px; width: 824px; height: 226px; }
.f-llist { left: 1px; top: 492px; width: 884px; height: 337px; }
.f-rlist { left: 972px; top: 481px; width: 800px; height: 336px; }
.f-queue { left: -2px; top: 835px; width: 962px; height: 142px; }
.n-log { left: 510px; top: 160px; }
.n-ltree { left: 820px; top: 312px; }
.n-rtree { left: 1401px; top: 305px; }
.n-llist { left: 616px; top: 640px; }
.n-rlist { left: 1163px; top: 650px; }
.n-queue { left: 532px; top: 912px; }
.arrows { left: 0; top: 0; width: 640px; height: 120px; }
```
